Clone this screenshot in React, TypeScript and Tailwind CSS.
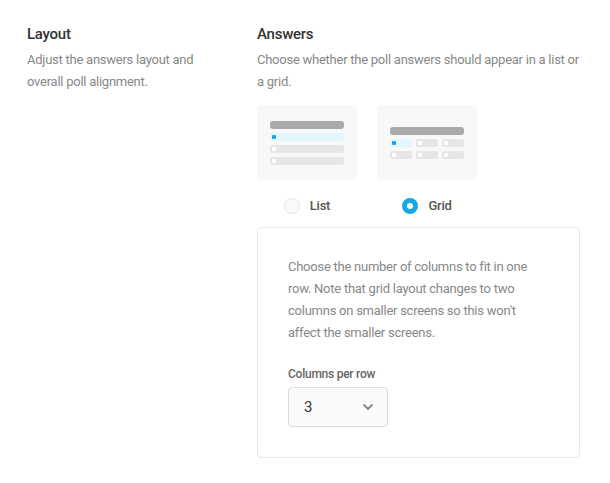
import React from 'react';

function ListPreview() {
  return (
    <div className="flex h-[75px] w-[100px] flex-col items-center justify-center gap-[4px] rounded-[4px] bg-[#f8f8f8]">
      <div className="h-[8px] w-[74px] rounded-[3px] bg-[#aaaaaa]"></div>
      <div className="flex h-[8px] w-[74px] items-center rounded-[2px] bg-[#e1f6ff] pl-[2px]">
        <span className="h-[4px] w-[4px] rounded-[1px] bg-[#17a8e3]"></span>
      </div>
      <div className="flex h-[8px] w-[74px] items-center rounded-[2px] bg-[#e6e6e6] pl-[2px]">
        <span className="h-[4px] w-[4px] rounded-[1px] bg-white"></span>
      </div>
      <div className="flex h-[8px] w-[74px] items-center rounded-[2px] bg-[#e6e6e6] pl-[2px]">
        <span className="h-[4px] w-[4px] rounded-[1px] bg-white"></span>
      </div>
    </div>
  );
}

function GridPreview() {
  const cells = [true, false, false, false, false, false];
  return (
    <div className="flex h-[75px] w-[100px] flex-col items-center justify-center gap-[4px] rounded-[4px] bg-[#f8f8f8]">
      <div className="h-[8px] w-[74px] rounded-[3px] bg-[#aaaaaa]"></div>
      <div className="grid w-[74px] grid-cols-3 gap-[4px]">
        {cells.map((on, i) => (
          <div
            key={i}
            className={
              on
                ? 'flex h-[8px] items-center rounded-[2px] bg-[#e1f6ff] pl-[2px]'
                : 'flex h-[8px] items-center rounded-[2px] bg-[#e6e6e6] pl-[2px]'
            }
          >
            <span className={on ? 'h-[4px] w-[4px] rounded-[1px] bg-[#17a8e3]' : 'h-[4px] w-[4px] rounded-[1px] bg-white'}></span>
          </div>
        ))}
      </div>
    </div>
  );
}

function Radio({ label, checked }: { label: string; checked?: boolean }) {
  return (
    <label className="flex w-[100px] items-center justify-center gap-[10px]">
      {checked ? (
        <span className="h-[16px] w-[16px] rounded-full border-[5px] border-[#17a8e3] bg-white"></span>
      ) : (
        <span className="h-[16px] w-[16px] rounded-full border border-[#e6e6e6] bg-[#fafafa]"></span>
      )}
      <span className="text-[13px] font-medium leading-[20px] tracking-[-0.25px] text-[#555555]">{label}</span>
    </label>
  );
}

export default function App() {
  return (
    <div className="min-h-[483px] bg-white font-['Roboto',_'Liberation_Sans',_sans-serif]">
      <div className="flex px-[27px] pt-[24px]">
        <div className="w-[230px] shrink-0">
          <h3 className="text-[15px] font-medium leading-[20px] tracking-[-0.25px] text-[#333333]">Layout</h3>
          <p className="mt-[5px] pr-[32px] text-[13px] leading-[22px] tracking-[-0.25px] text-[#888888]">
            Adjust the answers layout and overall poll alignment.
          </p>
        </div>

        <div className="w-[323px] shrink-0">
          <h3 className="text-[15px] font-medium leading-[20px] tracking-[-0.25px] text-[#333333]">Answers</h3>
          <p className="mt-[5px] text-[13px] leading-[22px] tracking-[-0.25px] text-[#888888]">
            Choose whether the poll answers should appear in a list or a grid.
          </p>

          <div className="mt-[12px] flex gap-[20px]">
            <ListPreview />
            <GridPreview />
          </div>

          <div className="mt-[16px] flex h-[20px] gap-[20px]">
            <Radio label="List" />
            <Radio label="Grid" checked />
          </div>

          <div className="mt-[11px] rounded-[4px] border border-[#e6e6e6] px-[30px] pb-[30px] pt-[28px]">
            <p className="text-[13px] leading-[22px] tracking-[-0.25px] text-[#888888]">
              Choose the number of columns to fit in one row. Note that grid layout changes to two columns on
              smaller screens so this won't affect the smaller screens.
            </p>
            <div className="mt-[22px] text-[12px] font-medium leading-[16px] tracking-[-0.25px] text-[#666666]">
              Columns per row
            </div>
            <div className="mt-[5px] flex h-[40px] w-[100px] items-center justify-between rounded-[4px] border border-[#dddddd] bg-[#fafafa] pl-[15px] pr-[14px]">
              <span className="text-[15px] text-[#333333]">3</span>
              <svg width="10" height="6" viewBox="0 0 10 6" fill="none">
                <path d="M1 1l4 4 4-4" stroke="#888888" strokeWidth="1.8" strokeLinecap="round" strokeLinejoin="round" />
              </svg>
            </div>
          </div>
        </div>
      </div>
    </div>
  );
}
